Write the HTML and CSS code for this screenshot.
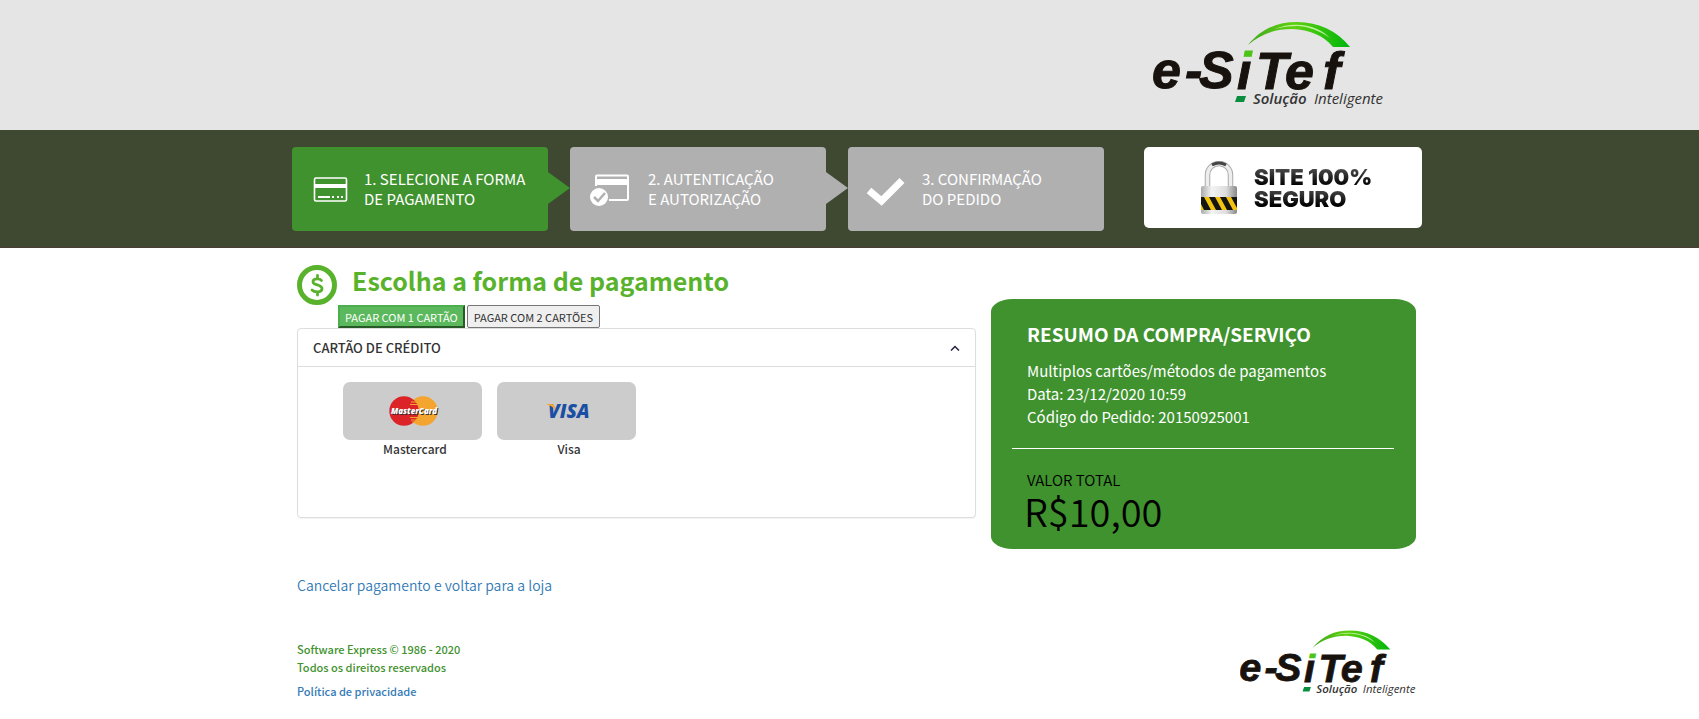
FILE: index.html
```html
<!DOCTYPE html>
<html lang="pt-BR">
<head>
    <meta charset="UTF-8">
    <meta name="viewport" content="width=device-width, initial-scale=1">
    <title>e-SiTef - Pagamento</title>
    <link rel="stylesheet" href="styles.css">
</head>
<body>
    <!-- logo compartilhado entre topo e rodapé -->
    <svg class="defs" width="0" height="0" aria-hidden="true">
        <defs>
            <linearGradient id="swash" x1="0" y1="0" x2="1" y2="0">
                <stop offset="0" stop-color="#3fa81e"/>
                <stop offset="0.45" stop-color="#5fd00f"/>
                <stop offset="1" stop-color="#00b50c"/>
            </linearGradient>
            <linearGradient id="letterI" gradientUnits="userSpaceOnUse" x1="0" y1="28" x2="0" y2="68">
                <stop offset="0" stop-color="#4cc417"/>
                <stop offset="0.26" stop-color="#4cc417"/>
                <stop offset="0.26" stop-color="#17120d"/>
                <stop offset="1" stop-color="#17120d"/>
            </linearGradient>
            <symbol id="logo" viewBox="0 0 236 88">
                <path fill="url(#swash)" d="M95 23C108 7 124 0 144 0c22 0 40 9 53 25h-17C170 13 157 8 139 7c-17 0-31 5-44 16z"/>
                <path fill="#e6ffc8" opacity=".75" d="M122 7c12-5 28-6 42 0 5 2 9 5 13 9-10-7-20-11-32-12-9 0-16 1-23 3z"/>
                <text class="logo-name" y="66"><tspan x="-1">e</tspan><tspan x="32">-</tspan><tspan x="46">S</tspan><tspan x="84" y="67" class="logo-i">i</tspan><tspan x="103" y="67">T</tspan><tspan x="132" y="67">e</tspan><tspan x="170" y="67">f</tspan></text>
                <path fill="#0b8d3e" d="M84 74h9l-2 6h-9z"/>
                <text class="logo-tag" y="82"><tspan x="100" class="strong">Solução</tspan><tspan x="161">Inteligente</tspan></text>
            </symbol>
        </defs>
    </svg>

    <header class="top">
        <div class="container">
            <svg class="logo" role="img" aria-label="e-SiTef"><use href="#logo"/></svg>
        </div>
    </header>

    <div class="steps-bar">
        <div class="container steps-row">
            <ol class="steps">
                <li class="step active">
                    <svg class="step-icon" viewBox="0 0 44 36">
                        <rect x="5.5" y="7" width="32" height="23" rx="1.500" fill="none" stroke="#fff" stroke-width="1.600"/>
                        <path fill="#fff" d="M5 13h33v4H5zM9 25h12v2H9zM23 25h2v2h-2zM28 25h2v2h-2zM32 25h2v2h-2z"/>
                    </svg>
                    <span>1. SELECIONE A FORMA<br>DE PAGAMENTO</span>
                </li>
                <li class="step">
                    <svg class="step-icon" viewBox="0 0 44 36">
                        <path fill="none" stroke="#fff" stroke-width="2" d="M9 15V5.500q0-1 1-1h30q1 0 1 1V28q0 1-1 1H22"/>
                        <path fill="#fff" d="M8 8h34v6H8z"/>
                        <circle cx="12" cy="26" r="9" fill="#fff"/>
                        <path fill="none" stroke="#b0b0b0" stroke-width="2.500" d="M7 26l4 4 7-8"/>
                    </svg>
                    <span>2. AUTENTICAÇÃO<br>E AUTORIZAÇÃO</span>
                </li>
                <li class="step last">
                    <svg class="step-icon" viewBox="0 0 44 36">
                        <path fill="none" stroke="#fff" stroke-width="7" stroke-linejoin="miter" d="M4 19.500L16.500 30 37 9.500"/>
                    </svg>
                    <span>3. CONFIRMAÇÃO<br>DO PEDIDO</span>
                </li>
            </ol>
            <div class="secure">
                <svg class="padlock" viewBox="0 0 38 54">
                    <defs>
                        <linearGradient id="steel" x1="0" x2="1">
                            <stop offset="0" stop-color="#aaa"/>
                            <stop offset="0.3" stop-color="#f4f4f4"/>
                            <stop offset="0.7" stop-color="#ddd"/>
                            <stop offset="1" stop-color="#888"/>
                        </linearGradient>
                    </defs>
                    <path fill="none" stroke="#aaa" stroke-width="5.500" d="M7.500 27V14a11.500 11.500 0 0 1 23 0v13"/>
                    <path fill="none" stroke="#eee" stroke-width="3.500" d="M7.500 27V14a11.500 11.500 0 0 1 23 0v13"/>
                    <path fill="none" stroke="#444" stroke-width="3" d="M12 4q7-4 14 0"/>
                    <rect x="1" y="25" width="36" height="28" rx="2" fill="url(#steel)"/>
                    <path fill="#f2c40f" d="M1 36h36v13H1z"/>
                    <path fill="#16140f" d="M1 36h3l7 13H4l-3-6zM9 36h6l7 13h-6zM20 36h6l7 13h-6zM31 36h6v11z"/>
                </svg>
                <strong>SITE 100%<br>SEGURO</strong>
            </div>
        </div>
    </div>

    <main class="container content">
        <section class="payment">
            <div class="title-row">
                <svg class="money" viewBox="0 0 40 40">
                    <circle cx="20" cy="20" r="17.500" fill="none" stroke="#59b22c" stroke-width="5"/>
                    <path fill="none" stroke="#59b22c" stroke-width="2.800" stroke-linecap="round" d="M24.500 15.500c-1.500-2-8.500-2.500-8.500 1.200 0 4 9 2.500 9 7 0 4-7.500 4-10 1.300M20.500 10.500v3M20.500 27v3"/>
                </svg>
                <h1>Escolha a forma de pagamento</h1>
            </div>
            <div class="tabs">
                <button type="button" class="tab selected">PAGAR COM 1 CARTÃO</button>
                <button type="button" class="tab">PAGAR COM 2 CARTÕES</button>
            </div>
            <div class="panel">
                <button type="button" class="panel-heading" aria-expanded="true">
                    <span>CARTÃO DE CRÉDITO</span>
                    <svg class="chevron" viewBox="0 0 10 6"><path fill="none" stroke="#2b2140" stroke-width="1.500" d="M1 5.500l4-4 4 4"/></svg>
                </button>
                <div class="panel-body">
                    <button type="button" class="brand">
                        <svg class="brand-logo" viewBox="0 0 139 58">
                            <circle cx="80" cy="29" r="14.700" fill="#f3a530"/>
                            <circle cx="61" cy="29" r="14.700" fill="#dc2428"/>
                            <path stroke="#f3a530" stroke-width="1.200" d="M68 20h6M67 22.500h8M67 35.500h8M68 38h6M69 40h3"/>
                            <text class="mc-text" x="71" y="32">MasterCard</text>
                        </svg>
                        <span>Mastercard</span>
                    </button>
                    <button type="button" class="brand">
                        <svg class="brand-logo" viewBox="0 0 139 58">
                            <text class="visa-text" x="51" y="36">VISA</text>
                            <path fill="#f3a530" d="M49 22h6q2 0 2.500 2l1 4q-3-4-9.500-6z"/>
                        </svg>
                        <span>Visa</span>
                    </button>
                </div>
            </div>
        </section>

        <aside class="summary">
            <h2>RESUMO DA COMPRA/SERVIÇO</h2>
            <p>Multiplos cartões/métodos de pagamentos</p>
            <p>Data: 23/12/2020 10:59</p>
            <p>Código do Pedido: 20150925001</p>
            <hr>
            <div class="total-label">VALOR TOTAL</div>
            <div class="total">R$10,00</div>
        </aside>
    </main>

    <div class="container cancel">
        <a href="#">Cancelar pagamento e voltar para a loja</a>
    </div>

    <footer class="container footer">
        <div class="copyright">
            <p>Software Express © 1986 - 2020</p>
            <p>Todos os direitos reservados</p>
            <a href="#">Política de privacidade</a>
        </div>
        <svg class="logo small" role="img" aria-label="e-SiTef"><use href="#logo"/></svg>
    </footer>
</body>
</html>
```
FILE: styles.css
```css
:root {
    --green: #3f922e;
    --light-green: #59b22c;
    --gray: #b0b0b0;
    --link: #337ab7;
}

* {
    box-sizing: border-box;
}

body {
    margin: 0;
    background: #fff;
    color: #333;
    font-family: "Noto Sans CJK JP", "Open Sans", sans-serif;
    font-size: 14px;
    line-height: 20px;
}

button {
    font-family: inherit;
    cursor: pointer;
}

h1, h2, p {
    margin: 0;
}

a {
    color: var(--link);
    text-decoration: none;
}

.defs {
    display: block;
}

.container {
    max-width: 1171px;
    margin: 0 auto;
}

/* topo */
.top {
    background: #e5e5e5;
}

.top .container {
    display: flex;
    justify-content: flex-end;
    padding: 22px 46px 20px;
}

.logo {
    display: block;
    width: 236px;
    height: 88px;
}

.logo.small {
    width: 180px;
    height: 68px;
}

.logo-name {
    font-family: "Liberation Sans", sans-serif;
    font-size: 52px;
    font-weight: 700;
    font-style: italic;
    fill: #17120d;
    stroke: #17120d;
    stroke-width: 1px;
}

.logo-i {
    fill: url(#letterI);
    stroke: url(#letterI);
}

.logo-tag {
    font-family: "Open Sans", sans-serif;
    font-size: 15px;
    font-style: italic;
    fill: #333;
}

.logo-tag .strong {
    font-weight: 600;
}

/* etapas */
.steps-bar {
    background: #3f4831;
    border-bottom: 1px solid #4b3c35;
}

.steps-row {
    display: flex;
    justify-content: space-between;
    align-items: flex-start;
    padding: 17px 13px 16px 28px;
}

.steps {
    display: flex;
    gap: 22px;
    margin: 0;
    padding: 0;
    list-style: none;
}

.step {
    position: relative;
    display: flex;
    align-items: center;
    gap: 17px;
    width: 256px;
    height: 84px;
    padding-left: 17px;
    border-radius: 4px;
    background: var(--gray);
    color: #fff;
    font-size: 15px;
    line-height: 20px;
    white-space: nowrap;
}

.step.active {
    gap: 11px;
    background: var(--green);
}

.step.last {
    gap: 13px;
}

.step:not(:last-child)::after {
    content: "";
    position: absolute;
    top: 25px;
    left: 100%;
    width: 22px;
    height: 32px;
    background: inherit;
    clip-path: polygon(0 0, 100% 50%, 0 100%);
}

.step-icon {
    flex: none;
    width: 44px;
    height: 36px;
}

.secure {
    display: flex;
    align-items: center;
    gap: 16px;
    width: 278px;
    height: 81px;
    padding-left: 56px;
    border-radius: 5px;
    background: #fff;
    color: #111;
}

.padlock {
    width: 38px;
    height: 54px;
}

.secure strong {
    font-family: Inter, sans-serif;
    font-size: 22px;
    font-weight: 900;
    line-height: 22px;
    background: linear-gradient(#555, #000 45%, #444 55%, #000 90%);
    background-clip: text;
    color: transparent;
}

/* conteudo */
.content {
    display: flex;
    align-items: flex-start;
    gap: 15px;
    padding: 17px 19px 0 33px;
}

.payment {
    flex: 1;
}

.title-row {
    display: flex;
    align-items: flex-start;
    gap: 15px;
    height: 40px;
}

.money {
    flex: none;
    width: 40px;
    height: 40px;
}

h1 {
    color: var(--light-green);
    font-size: 25px;
    font-weight: 700;
    line-height: 30px;
}

.tabs {
    display: flex;
    gap: 2px;
    padding-left: 41px;
}

.tab {
    height: 23px;
    padding: 0 6px;
    border: 1px solid #767676;
    border-radius: 2px;
    background: #efefef;
    color: #333;
    font-size: 11px;
    line-height: 18px;
}

.tab.selected {
    padding: 0 5px;
    border: 2px outset #4cae4c;
    border-radius: 0;
    background: #5cb85c;
    color: #fff;
}

.panel {
    border: 1px solid #ddd;
    border-radius: 4px;
    box-shadow: 0 1px 1px rgba(0, 0, 0, 0.05);
}

.panel-heading {
    display: flex;
    justify-content: space-between;
    align-items: center;
    width: 100%;
    height: 38px;
    padding: 1px 15px 0;
    border: 0;
    border-bottom: 1px solid #ddd;
    background: none;
    color: #333;
    font-size: 13px;
    font-weight: 500;
    line-height: 20px;
}

.chevron {
    width: 10px;
    height: 6px;
}

.panel-body {
    display: flex;
    gap: 15px;
    min-height: 150px;
    padding: 15px 45px;
}

.brand {
    display: flex;
    flex-direction: column;
    align-items: center;
    width: 139px;
    padding: 0;
    border: 0;
    background: none;
    color: #333;
    font-size: 12px;
    font-weight: 500;
    line-height: 18px;
}

.brand-logo {
    width: 139px;
    height: 58px;
    border-radius: 7px;
    background: #ccc;
}

.brand span {
    padding-left: 5px;
}

.mc-text {
    font-family: "Open Sans", sans-serif;
    font-size: 8px;
    font-weight: 800;
    font-style: italic;
    text-anchor: middle;
    fill: #fff;
    text-shadow: 1px 1px 0 #333;
}

.visa-text {
    font-family: "Open Sans", sans-serif;
    font-size: 19px;
    font-weight: 800;
    font-style: italic;
    fill: #1a4fa3;
}

/* resumo */
.summary {
    width: 425px;
    margin-top: 34px;
    padding: 22px 22px 18px 21px;
    border-radius: 5%;
    background: var(--green);
    color: #fff;
    font-size: 15px;
    line-height: 23px;
}

.summary h2,
.summary p,
.summary .total-label {
    padding-left: 15px;
}

.summary h2 {
    margin-bottom: 12px;
    font-size: 19px;
    font-weight: 700;
    line-height: 26px;
}

.summary hr {
    margin: 20px 0 19px;
    border: 0;
    border-top: 1px solid #fff;
}

.total-label {
    color: #000;
    font-weight: 350;
}

.total {
    padding-left: 12px;
    color: #000;
    font-size: 38px;
    font-weight: 350;
    line-height: 40px;
}

/* rodape */
.cancel {
    padding: 26px 33px 0;
    font-size: 14px;
    font-weight: 350;
}

.footer {
    display: flex;
    justify-content: space-between;
    align-items: flex-start;
    padding: 35px 15px 16px 33px;
    color: var(--green);
    font-size: 11px;
    font-weight: 500;
    line-height: 18px;
}

.copyright {
    padding-top: 10px;
}

.copyright a {
    display: block;
    margin-top: 6px;
}
```
